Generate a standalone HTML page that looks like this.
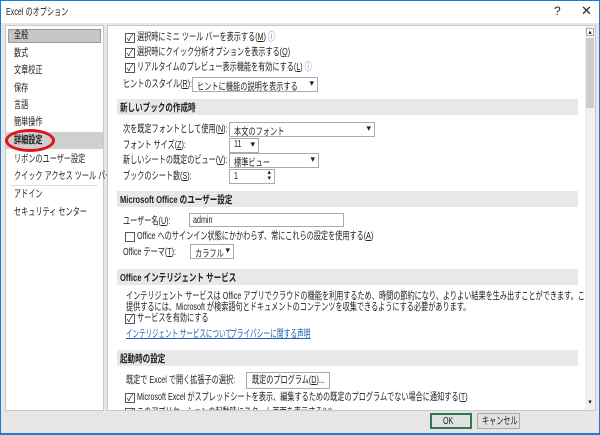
<!DOCTYPE html><html><head><meta charset="utf-8"><style>
*{margin:0;padding:0;box-sizing:border-box}
body{width:600px;height:435px;overflow:hidden;font-family:"Liberation Sans","Noto Sans CJK JP",sans-serif;font-size:10.5px;color:#222;position:relative;background:#1a7ad6}
.win{position:absolute;left:1px;top:1px;width:598px;height:432px;background:#e6e6e6}
.title{position:absolute;left:0;top:0;width:598px;height:22px;background:#fff}
.a{position:absolute;white-space:nowrap}
.t{position:absolute;white-space:nowrap;transform:scaleX(0.68);transform-origin:0 0;line-height:13px}
.lp{position:absolute;left:4px;top:24px;width:99px;height:386px;background:#fff;border:1px solid #c8c8c8}
.rp{position:absolute;left:106px;top:24px;width:489px;height:386px;background:#fff;border:1px solid #c8c8c8;overflow:hidden}
.hd{position:absolute;left:9px;width:461px;height:16px;background:#e8e8e8}
.hd span{position:absolute;left:3px;top:1px;font-weight:bold;white-space:nowrap;transform:scaleX(0.72);transform-origin:0 0}
.cb{position:absolute;width:10px;height:10px;border:1px solid #555;background:#fff;font-size:9px;line-height:8px;text-align:center}
.sel{position:absolute;border:1px solid #aaa;background:#fff;height:15px;font-size:10px}
.sel span{position:absolute;left:4px;top:0;white-space:nowrap;transform:scaleX(0.72);transform-origin:0 0}
.sel:after{content:"▾";position:absolute;right:3px;top:0;font-size:9px}
.lnk{color:#1a5fb4;text-decoration:underline}
</style></head><body><div class="win">
<div class="title"><span class="t" style="left:5px;top:5px">Excel のオプション</span><span class="a" style="left:553px;top:3px;font-size:12px">?</span><span class="a" style="left:580px;top:2px;font-size:13px">✕</span></div>
<div class="lp">
<div class="a" style="left:2px;top:3px;width:93px;height:14px;background:#c6c6c6;border:1px solid #999"></div>
<span class="t" style="left:8px;top:3px">全般</span>
<span class="t" style="left:8px;top:21px">数式</span>
<span class="t" style="left:8px;top:38px">文章校正</span>
<span class="t" style="left:8px;top:56px">保存</span>
<span class="t" style="left:8px;top:73px">言語</span>
<span class="t" style="left:8px;top:90px">簡単操作</span>
<div class="a" style="left:0;top:106px;width:97px;height:17px;background:#cfcfcf"></div>
<span class="t" style="left:8px;top:108px;font-weight:bold">詳細設定</span>
<div class="a" style="left:-1px;top:103px;width:50px;height:23px;border:3px solid #e0141b;border-radius:50%"></div>
<span class="t" style="left:8px;top:127px">リボンのユーザー設定</span>
<span class="t" style="left:8px;top:144px">クイック アクセス ツール バー</span>
<div class="a" style="left:4px;top:159px;width:88px;height:1px;background:#ddd"></div>
<span class="t" style="left:8px;top:162px">アドイン</span>
<span class="t" style="left:8px;top:180px">セキュリティ センター</span>
</div>
<div class="rp">
<div class="cb" style="left:17px;top:7px">✓</div><span class="t" style="left:29px;top:5px">選択時にミニ ツール バーを表示する(<u>M</u>) <span style="color:#3a78c8">ⓘ</span></span>
<div class="cb" style="left:17px;top:22px">✓</div><span class="t" style="left:29px;top:20px">選択時にクイック分析オプションを表示する(<u>Q</u>)</span>
<div class="cb" style="left:17px;top:37px">✓</div><span class="t" style="left:29px;top:35px">リアルタイムのプレビュー表示機能を有効にする(<u>L</u>) <span style="color:#3a78c8">ⓘ</span></span>
<span class="t" style="left:15px;top:52px">ヒントのスタイル(<u>R</u>):</span><div class="sel" style="left:84px;top:51px;width:126px"><span>ヒントに機能の説明を表示する</span></div>
<div class="hd" style="top:73px"><span>新しいブックの作成時</span></div>
<span class="t" style="left:15px;top:97px">次を既定フォントとして使用(<u>N</u>):</span><div class="sel" style="left:121px;top:96px;width:146px"><span>本文のフォント</span></div>
<span class="t" style="left:15px;top:113px">フォント サイズ(<u>Z</u>):</span><div class="sel" style="left:121px;top:112px;width:30px"><span>11</span></div>
<span class="t" style="left:15px;top:128px">新しいシートの既定のビュー(<u>V</u>):</span><div class="sel" style="left:121px;top:127px;width:90px"><span>標準ビュー</span></div>
<span class="t" style="left:15px;top:144px">ブックのシート数(<u>S</u>):</span><div class="a" style="left:121px;top:143px;width:46px;height:15px;border:1px solid #aaa"><span class="t" style="left:4px;top:0">1</span><span style="position:absolute;right:3px;top:0;font-size:7px;line-height:6px">▴<br>▾</span></div>
<div class="hd" style="top:165px"><span>Microsoft Office のユーザー設定</span></div>
<span class="t" style="left:15px;top:189px">ユーザー名(<u>U</u>):</span><div class="a" style="left:81px;top:187px;width:155px;height:14px;border:1px solid #aaa"><span class="t" style="left:3px;top:0">admin</span></div>
<div class="cb" style="left:17px;top:206px"></div><span class="t" style="left:29px;top:204px">Office へのサインイン状態にかかわらず、常にこれらの設定を使用する(<u>A</u>)</span>
<span class="t" style="left:15px;top:220px">Office テーマ(<u>T</u>):</span><div class="sel" style="left:82px;top:218px;width:44px"><span>カラフル</span></div>
<div class="hd" style="top:243px"><span>Office インテリジェント サービス</span></div>
<span class="t" style="left:18px;top:264px">インテリジェント サービスは Office アプリでクラウドの機能を利用するため、時間の節約になり、よりよい結果を生み出すことができます。これらのサービスを</span>
<span class="t" style="left:18px;top:275px">提供するには、Microsoft が検索語句とドキュメントのコンテンツを収集できるようにする必要があります。</span>
<div class="cb" style="left:17px;top:288px">✓</div><span class="t" style="left:29px;top:286px">サービスを有効にする</span>
<span class="t lnk" style="left:18px;top:302px;transform:scaleX(0.62)">インテリジェント サービスについて</span><span class="t lnk" style="left:122px;top:302px;transform:scaleX(0.64)">プライバシーに関する声明</span>
<div class="hd" style="top:324px"><span>起動時の設定</span></div>
<span class="t" style="left:18px;top:348px">既定で Excel で開く拡張子の選択:</span><div class="a" style="left:138px;top:346px;width:84px;height:17px;border:1px solid #aaa;background:#fdfdfd"><span class="t" style="left:5px;top:1px">既定のプログラム(<u>D</u>)...</span></div>
<div class="cb" style="left:17px;top:367px">✓</div><span class="t" style="left:29px;top:365px">Microsoft Excel がスプレッドシートを表示、編集するための既定のプログラムでない場合に通知する(<u>T</u>)</span>
<div class="cb" style="left:17px;top:382px">✓</div><span class="t" style="left:29px;top:380px">このアプリケーションの起動時にスタート画面を表示する(<u>H</u>)</span>
<div class="a" style="left:477px;top:0;width:10px;height:384px;background:#f0f0f0"></div>
<div class="a" style="left:478px;top:2px;width:8px;height:8px;font-size:7px;line-height:7px;text-align:center;border:1px solid #aaa;background:#fff">▴</div>
<div class="a" style="left:478px;top:12px;width:8px;height:70px;background:#cdcdcd"></div>
<div class="a" style="left:478px;top:372px;width:8px;height:8px;font-size:7px;text-align:center">▾</div>
</div>
</div>
<div class="a" style="left:430px;top:413px;width:42px;height:16px;border:2px solid #2d7a4f;background:#e1e1e1"><span class="t" style="left:11px;top:0">OK</span></div>
<div class="a" style="left:477px;top:413px;width:43px;height:16px;border:1px solid #adadad;background:#e1e1e1"><span class="t" style="left:4px;top:1px">キャンセル</span></div>
</body></html>
